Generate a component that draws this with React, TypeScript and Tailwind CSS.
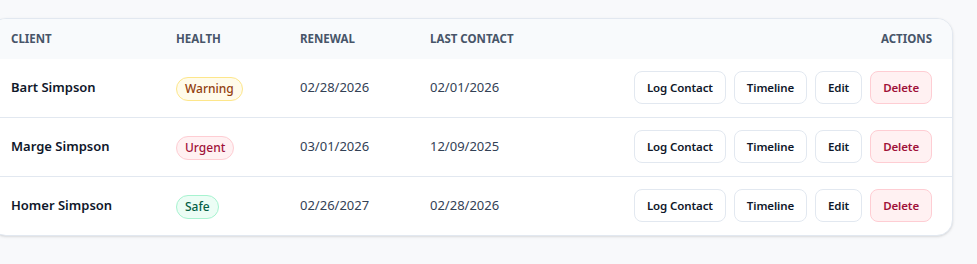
import React from "react"

type Health = "Warning" | "Urgent" | "Safe"

interface Client {
  name: string
  health: Health
  renewal: string
  lastContact: string
}

const CLIENTS: Client[] = [
  { name: "Bart Simpson", health: "Warning", renewal: "02/28/2026", lastContact: "02/01/2026" },
  { name: "Marge Simpson", health: "Urgent", renewal: "03/01/2026", lastContact: "12/09/2025" },
  { name: "Homer Simpson", health: "Safe", renewal: "02/26/2027", lastContact: "02/28/2026" },
]

const BADGE: Record<Health, string> = {
  Warning: "bg-[#fffbeb] border-[#fde68a] text-[#92400e]",
  Urgent: "bg-[#fff1f2] border-[#fecdd3] text-[#9f1239]",
  Safe: "bg-[#ecfdf5] border-[#a7f3d0] text-[#065f46]",
}

function HealthBadge({ health }: { health: Health }) {
  return (
    <span
      className={`inline-flex items-center h-6 px-2 rounded-full border text-[12px] font-medium ${BADGE[health]}`}
    >
      {health}
    </span>
  )
}

function ActionButton({ label, danger }: { label: string; danger?: boolean }) {
  return (
    <button
      type="button"
      className={
        "h-[33px] px-3 rounded-lg border text-[11.5px] font-semibold tracking-[-0.01em] " +
        (danger
          ? "bg-[#fff1f2] border-[#fecdd3] text-[#9f1239]"
          : "bg-white border-[#e2e8f0] text-[#0f172a]")
      }
    >
      {label}
    </button>
  )
}

export default function App() {
  return (
    <div
      className="min-h-screen bg-[#f8f9fb] pt-[18px] pr-[24px]"
      style={{ fontFamily: '"Noto Sans", "Open Sans", sans-serif' }}
    >
      {/* table card, left edge scrolled slightly out of view */}
      <div className="ml-[-10px] rounded-2xl border border-[#e2e8f0] bg-white shadow-sm overflow-hidden">
        <table className="w-full border-collapse text-left">
          <thead>
            <tr className="bg-[#f8fafc] h-10 text-[11.5px] font-bold uppercase text-[#475569]">
              <th className="pl-5 w-[185px] font-bold">Client</th>
              <th className="w-[124px] font-bold">Health</th>
              <th className="w-[130px] font-bold">Renewal</th>
              <th className="font-bold">Last Contact</th>
              <th className="pr-5 text-right font-bold">Actions</th>
            </tr>
          </thead>
          <tbody>
            {CLIENTS.map((c, i) => (
              <tr key={c.name} className={i > 0 ? "h-[59px] border-t border-[#e2e8f0]" : "h-[58px]"}>
                <td className="pl-5 text-[13px] font-semibold text-[#0f172a]">{c.name}</td>
                <td>
                  <HealthBadge health={c.health} />
                </td>
                <td className="text-[13px] text-[#334155]">{c.renewal}</td>
                <td className="text-[13px] text-[#334155]">{c.lastContact}</td>
                <td className="pr-5">
                  <div className="flex justify-end gap-2">
                    <ActionButton label="Log Contact" />
                    <ActionButton label="Timeline" />
                    <ActionButton label="Edit" />
                    <ActionButton label="Delete" danger />
                  </div>
                </td>
              </tr>
            ))}
          </tbody>
        </table>
      </div>
    </div>
  )
}
